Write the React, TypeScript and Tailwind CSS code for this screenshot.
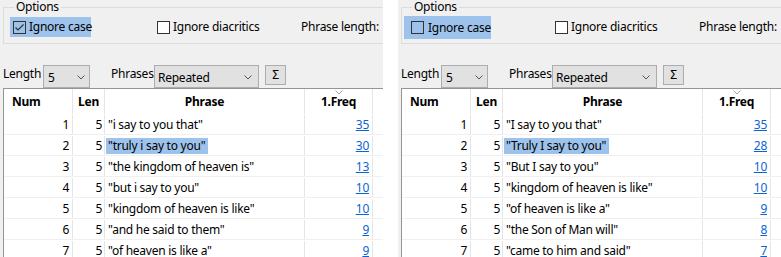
import React from "react";

type Row = [number, number, string, number];

const leftRows: Row[] = [
  [1, 5, '"i say to you that"', 35],
  [2, 5, '"truly i say to you"', 30],
  [3, 5, '"the kingdom of heaven is"', 13],
  [4, 5, '"but i say to you"', 10],
  [5, 5, '"kingdom of heaven is like"', 10],
  [6, 5, '"and he said to them"', 9],
  [7, 5, '"of heaven is like a"', 9],
];

const rightRows: Row[] = [
  [1, 5, '"I say to you that"', 35],
  [2, 5, '"Truly I say to you"', 28],
  [3, 5, '"But I say to you"', 10],
  [4, 5, '"kingdom of heaven is like"', 10],
  [5, 5, '"of heaven is like a"', 9],
  [6, 5, '"the Son of Man will"', 8],
  [7, 5, '"came to him and said"', 7],
];

function CheckBox({ checked, transparent }: { checked: boolean; transparent: boolean }) {
  return (
    <span
      className={
        transparent
          ? "w-[13px] h-[13px] shrink-0 border border-[#333333] bg-transparent flex items-center justify-center"
          : "w-[13px] h-[13px] shrink-0 border border-[#333333] bg-white flex items-center justify-center"
      }
    >
      {checked && (
        <svg width="11" height="11" viewBox="0 0 11 11">
          <polyline points="1.5,5.5 4,8 9.5,2.5" fill="none" stroke="#333333" strokeWidth="1.2" />
        </svg>
      )}
    </span>
  );
}

function Chevron() {
  return (
    <svg width="8" height="5" viewBox="0 0 8 5" className="shrink-0">
      <polyline points="0.5,0.5 4,4 7.5,0.5" fill="none" stroke="#555555" strokeWidth="1" />
    </svg>
  );
}

function Select({ value, wide }: { value: string; wide: boolean }) {
  return (
    <div
      className={
        wide
          ? "w-[105px] h-[23px] shrink-0 border border-[#adadad] bg-[#e1e1e1] flex items-center justify-between pl-[3px] pr-[6px] pt-[2px]"
          : "w-[47px] h-[23px] shrink-0 border border-[#adadad] bg-[#e1e1e1] flex items-center justify-between pl-[4px] pr-[4px] pt-[2px]"
      }
    >
      <span className="leading-[16px] whitespace-nowrap">{value}</span>
      <Chevron />
    </div>
  );
}

function Panel({ rows, checked, focused }: { rows: Row[]; checked: boolean; focused: boolean }) {
  return (
    <div className="w-[383px] h-[257px] shrink-0 overflow-hidden bg-[#f0f0f0] flex flex-col">
      <fieldset className="ml-[3px] w-[430px] shrink-0 border border-[#dcdcdc] px-0 pt-[3px] pb-[6px]">
        <legend className="ml-[10px] px-[2px] leading-[14px]">Options</legend>
        <div className="flex items-center h-[20px]">
          <div className="w-[153px] shrink-0 flex items-center">
            {focused ? (
              <span className="ml-[2px] w-[87px] h-[23px] bg-[#9dc3ec] flex items-center pl-[7px] gap-[4px] mt-[1px]">
                <CheckBox checked={checked} transparent={true} />
                <span className="leading-[16px] whitespace-nowrap">Ignore case</span>
              </span>
            ) : (
              <span className="ml-[6px] w-[81px] h-[20px] bg-[#9dc3ec] flex items-center pl-[3px] gap-[3px]">
                <CheckBox checked={checked} transparent={true} />
                <span className="leading-[16px] whitespace-nowrap">Ignore case</span>
              </span>
            )}
          </div>
          <div className="w-[144px] shrink-0 flex items-center gap-[3px]">
            <CheckBox checked={false} transparent={false} />
            <span className="leading-[16px] whitespace-nowrap">Ignore diacritics</span>
          </div>
          <span className="leading-[16px] whitespace-nowrap">Phrase length:</span>
        </div>
      </fieldset>

      <div className="mt-[21px] flex items-start h-[23px] shrink-0">
        <span className="ml-[3px] w-[40px] shrink-0 leading-[16px] mt-[1px] whitespace-nowrap">Length</span>
        <Select value="5" wide={false} />
        <span className="ml-[21px] w-[43px] shrink-0 leading-[16px] mt-[1px] whitespace-nowrap">Phrases</span>
        <Select value="Repeated" wide={true} />
        <div className="ml-[6px] w-[21px] h-[20px] shrink-0 border border-[#adadad] bg-[#e1e1e1] flex items-center justify-center leading-[16px]">
          Σ
        </div>
      </div>

      <div className="ml-[3px] w-[430px] flex-1 bg-white border-l border-t border-[#959595] overflow-hidden">
        <div className="flex h-[25px] font-bold">
          <div className="w-[69px] shrink-0 border-r border-[#e5e5e5] flex items-center pl-[8px]">Num</div>
          <div className="w-[32px] shrink-0 border-r border-[#e5e5e5] flex items-center justify-center">Len</div>
          <div className="w-[200px] shrink-0 border-r border-[#e5e5e5] flex items-center justify-center">Phrase</div>
          <div className="relative w-[68px] shrink-0 border-r border-[#e5e5e5] flex items-center justify-center">
            <svg width="8" height="5" viewBox="0 0 8 5" className="absolute left-[30px] top-[1px]">
              <polyline points="0.5,0.5 4,4 7.5,0.5" fill="none" stroke="#a0a0a0" strokeWidth="1" />
            </svg>
            1.Freq
          </div>
        </div>
        {rows.map((r) => (
          <div key={r[0]} className="flex h-[21px] border-b border-[#f0f0f0] pt-[1px]">
            <div className="w-[69px] shrink-0 border-r border-[#e5e5e5] text-right pr-[3px] leading-[20px]">{r[0]}</div>
            <div className="w-[32px] shrink-0 border-r border-[#e5e5e5] text-right pr-[2px] leading-[20px]">{r[1]}</div>
            <div className="w-[200px] shrink-0 border-r border-[#e5e5e5] pl-[1px] flex items-center whitespace-nowrap">
              {r[0] === 2 ? (
                <span className="bg-[#9dc3ec] leading-[16px] pl-[2px] pr-[3px]">{r[2]}</span>
              ) : (
                <span className="leading-[16px] pl-[2px]">{r[2]}</span>
              )}
            </div>
            <div className="w-[68px] shrink-0 border-r border-[#e5e5e5] text-right pr-[3px] leading-[20px]">
              <span className="text-[#0a64d4] underline">{r[3]}</span>
            </div>
          </div>
        ))}
      </div>
    </div>
  );
}

export default function App() {
  return (
    <div className="w-[781px] h-[257px] overflow-hidden bg-white flex text-[12px] tracking-[-0.25px] text-black font-['Noto_Sans',sans-serif]">
      <Panel rows={leftRows} checked={true} focused={false} />
      <div className="w-[15px] shrink-0" />
      <Panel rows={rightRows} checked={false} focused={true} />
    </div>
  );
}
